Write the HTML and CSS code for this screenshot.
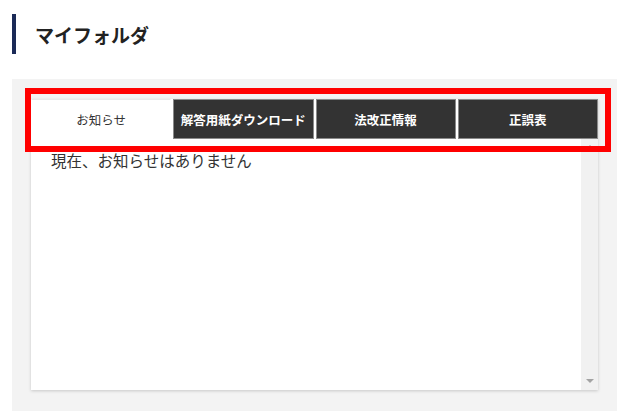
FILE: index.html
```html
<!DOCTYPE html>
<html lang="ja">
<head>
<meta charset="utf-8">
<link rel="stylesheet" href="styles.css">
</head>
<body>
<h1 class="title">マイフォルダ</h1>
<div class="panel">
  <div class="card">
    <div class="tabs">
      <div class="tab active">お知らせ</div>
      <div class="tab">解答用紙ダウンロード</div>
      <div class="tab">法改正情報</div>
      <div class="tab">正誤表</div>
    </div>
    <div class="content">
      <div class="text">現在、お知らせはありません</div>
      <div class="scrollbar">
        <span class="arrow up"></span>
        <span class="arrow down"></span>
      </div>
    </div>
  </div>
</div>
<div class="highlight"></div>
</body>
</html>
```
FILE: styles.css
```css
html, body {
  margin: 0;
  padding: 0;
  background: #fff;
  font-family: "Noto Sans CJK JP", "Noto Sans", sans-serif;
  color: #333;
}
body {
  position: relative;
  width: 630px;
  height: 411px;
  overflow: hidden;
}
.title {
  margin: 14px 0 0 12px;
  height: 40px;
  border-left: 4px solid #1b2a57;
  padding-left: 19px;
  display: flex;
  align-items: center;
  font-size: 19px;
  font-weight: bold;
  color: #222;
  box-sizing: border-box;
}
.panel {
  margin: 25px 0 0 12px;
  width: 605px;
  height: 340px;
  background: #f3f3f3;
  padding: 20px 19px 0;
  box-sizing: border-box;
}
.card {
  background: #fff;
  height: 291px;
  box-shadow: 0 1px 3px rgba(0,0,0,0.18);
  display: flex;
  flex-direction: column;
}
.tabs {
  display: grid;
  grid-template-columns: repeat(4, 1fr);
  gap: 2px;
  height: 40px;
}
.tab {
  display: flex;
  align-items: center;
  justify-content: center;
  background: #333;
  border: 1px solid #8a8a8a;
  color: #fff;
  font-size: 12.5px;
  font-weight: bold;
  white-space: nowrap;
}
.tab.active {
  background: #fff;
  border-color: #fff;
  border-top-color: #e8e8e8;
  color: #333;
  font-weight: normal;
}
.content {
  flex: 1;
  display: flex;
}
.text {
  flex: 1;
  padding: 10px 0 0 20px;
  font-size: 15.5px;
  line-height: 22px;
}
.scrollbar {
  width: 17px;
  background: #f1f1f1;
  display: flex;
  flex-direction: column;
  justify-content: space-between;
  align-items: center;
  padding: 6px 0 7px;
}
.arrow {
  width: 0;
  height: 0;
  border-left: 4px solid transparent;
  border-right: 4px solid transparent;
}
.arrow.up {
  border-bottom: 4px solid #a3a3a3;
}
.arrow.down {
  border-top: 4px solid #a3a3a3;
}
.highlight {
  position: absolute;
  left: 25px;
  top: 88px;
  width: 586px;
  height: 64px;
  border: 6px solid #f00;
  box-sizing: border-box;
}
```
